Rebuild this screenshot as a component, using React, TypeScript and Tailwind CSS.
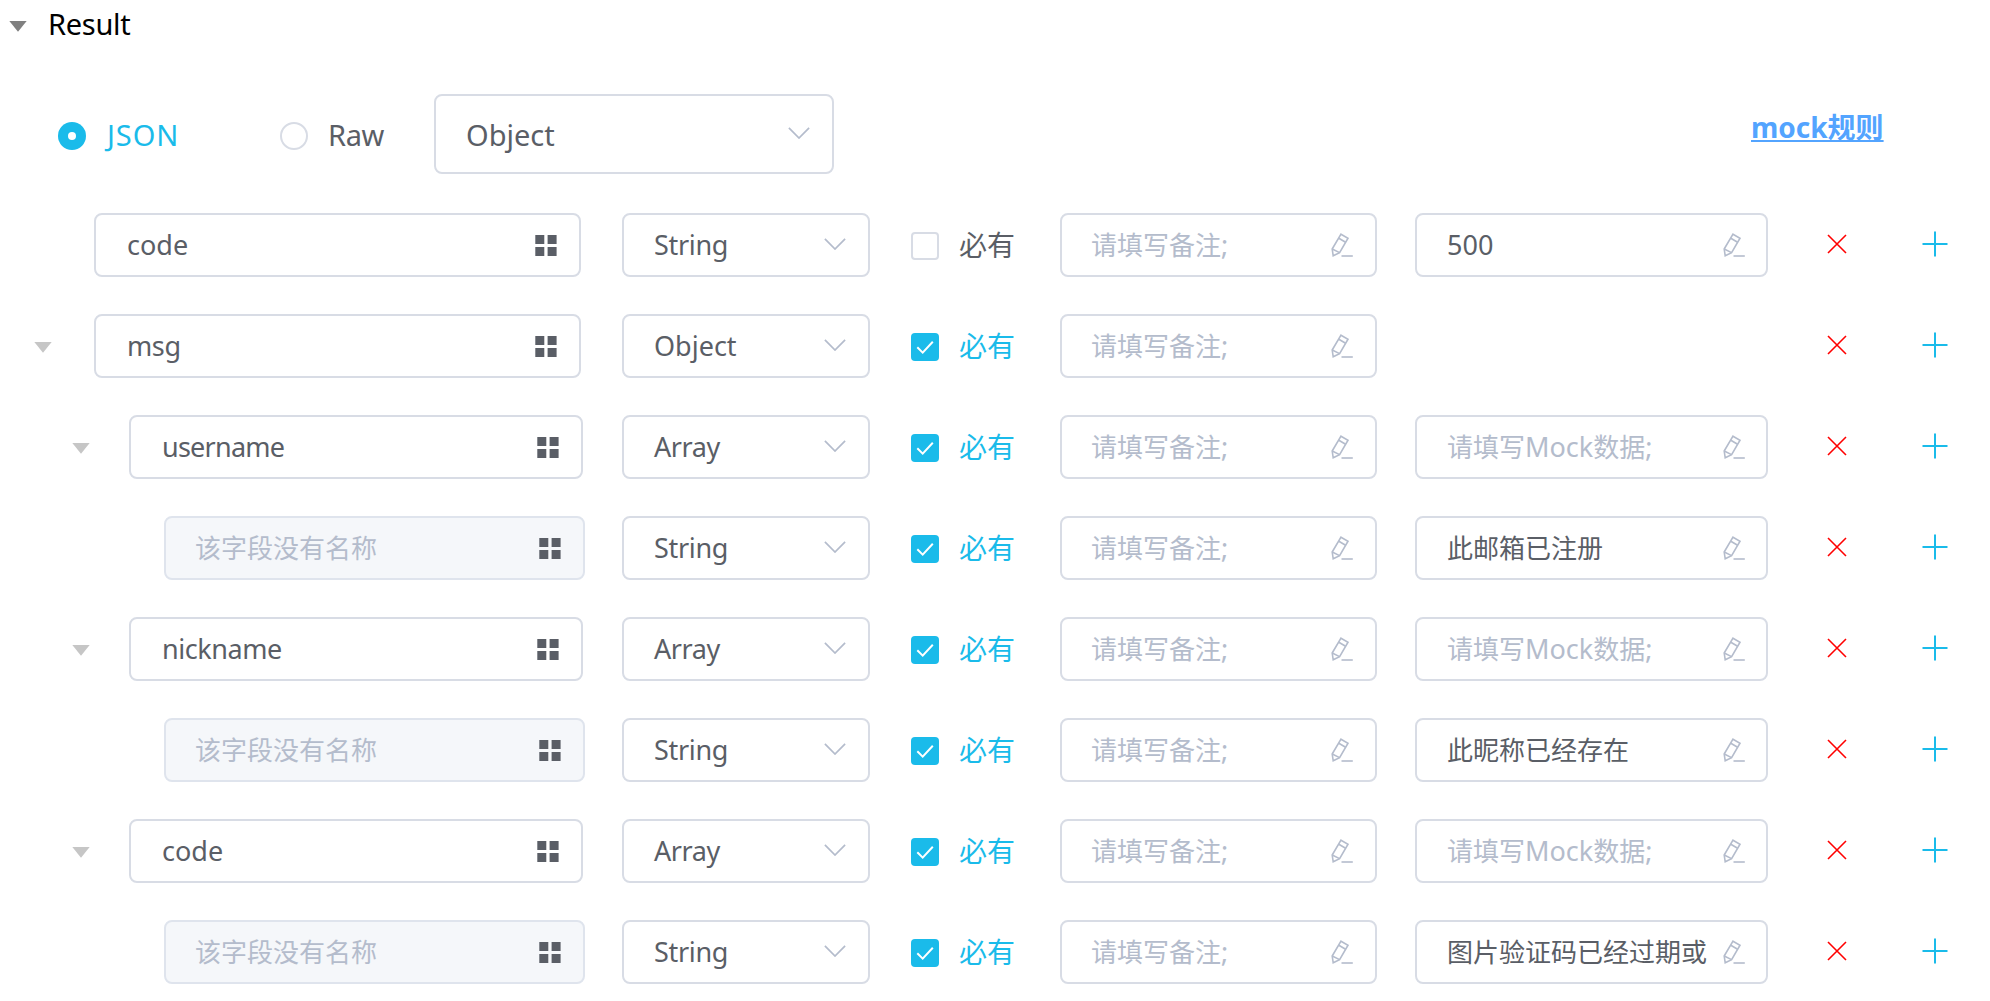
import React from "react";

const GRAY = "text-[#5a5e66]";

const tracking: Record<string, string> = {
  username: "tracking-[-0.75px]",
  nickname: "tracking-[-0.45px]",
  String: "tracking-[-0.3px]",
  Array: "tracking-[-0.4px]",
  msg: "tracking-[-0.4px]",
  JSON: "tracking-[0.9px]",
  Raw: "tracking-[-0.4px]",
  Result: "tracking-[-0.3px]",
};

function Txt({ children, size = "s" }: { children: string; size?: "s" | "m" }) {
  const parts = children.match(/[\x00-\x7f]+|[^\x00-\x7f]+/g) ?? [];
  return (
    <>
      {parts.map((p, i) =>
        p.charCodeAt(0) < 128 ? (
          <span key={i} className={`${size === "m" ? "text-[29px]" : "text-[27px]"} ${tracking[p] ?? ""}`}>{p}</span>
        ) : (
          <span key={i} className={size === "m" ? "text-[28px]" : "text-[26px]"}>{p}</span>
        ),
      )}
    </>
  );
}

function Triangle({ className }: { className: string }) {
  return (
    <svg viewBox="0 0 18 11" className={`h-[11px] w-[18px] shrink-0 fill-current ${className}`}>
      <path d="M0.3 0H17.7L9 10.7Z" />
    </svg>
  );
}

function Chevron() {
  return (
    <svg viewBox="0 0 22 12" className="mb-[3px] h-3 w-[22px] shrink-0 fill-none stroke-[#b4bccc] stroke-[1.7]">
      <path d="M0.9 0.9 11 11 21.1 0.9" />
    </svg>
  );
}

function GridIcon() {
  return (
    <svg viewBox="0 0 22 21" className="h-[21px] w-[22px] shrink-0 fill-[#5a5e66]">
      <path d="M.3 0h9v9h-9zM12.6 0h9v9h-9zM.3 12h9v9h-9zM12.6 12h9v9h-9z" />
    </svg>
  );
}

function Pencil() {
  return (
    <svg viewBox="0 0 22 24" className="h-6 w-[22px] shrink-0 fill-none stroke-[#b4bccc] stroke-[1.6]">
      <path d="M10 1.2 17 5.2 8.6 19.6 2.2 22.8 1.2 16Z" />
      <path d="M7.8 5.2 14.6 9.2M1.2 16 8.6 19.6" />
      <path d="M10.5 23H21.8" />
    </svg>
  );
}

const box = "flex h-16 shrink-0 items-center rounded-lg border-2 border-[#d8dce5]";
const line = "pt-1 leading-[56px]";

function Field({ text, hint, className }: { text?: string; hint: string; className: string }) {
  return (
    <div className={`${box} ${className}`}>
      <span className={`min-w-0 flex-1 overflow-hidden whitespace-nowrap ${line} ${text ? GRAY : "text-[#b4bccc]"}`}>
        <Txt>{text ?? hint}</Txt>
      </span>
      <Pencil />
    </div>
  );
}

type Row = { name?: string; level: 0 | 1 | 2; type: string; required: boolean; open?: boolean; mock?: string; noMock?: boolean };

const rows: Row[] = [
  { name: "code", level: 0, type: "String", required: false, mock: "500" },
  { name: "msg", level: 0, type: "Object", required: true, open: true, noMock: true },
  { name: "username", level: 1, type: "Array", required: true, open: true },
  { level: 2, type: "String", required: true, mock: "此邮箱已注册" },
  { name: "nickname", level: 1, type: "Array", required: true, open: true },
  { level: 2, type: "String", required: true, mock: "此昵称已经存在" },
  { name: "code", level: 1, type: "Array", required: true, open: true },
  { level: 2, type: "String", required: true, mock: "图片验证码已经过期或" },
];

const gutter = { 0: "w-[94px] pl-[34px]", 1: "w-[129px] pl-[72px]", 2: "w-[164px]" };
const nameWidth = { 0: "w-[487px] mr-[41px]", 1: "w-[454px] mr-[39px]", 2: "w-[421px] mr-[37px]" };

function FieldRow({ row }: { row: Row }) {
  return (
    <div className="flex h-16 items-center">
      <div className={`shrink-0 ${gutter[row.level]}`}>{row.open && <Triangle className="mt-[3px] text-[#c6c6c6]" />}</div>
      <div className={`${box} pr-[22px] ${nameWidth[row.level]} ${row.name ? "pl-[31px]" : "border-[#dfe4ed] bg-[#f5f7fa] pl-[29px]"}`}>
        <span className={`flex-1 ${line} ${row.name ? GRAY : "text-[#b4bccc]"}`}>
          <Txt>{row.name ?? "该字段没有名称"}</Txt>
        </span>
        <GridIcon />
      </div>
      <div className={`${box} mr-[41px] w-[248px] pr-[22px] pl-[30px] ${GRAY}`}>
        <span className={`flex-1 ${line}`}>
          <Txt>{row.type}</Txt>
        </span>
        <Chevron />
      </div>
      {row.required ? (
        <div className="mt-[2px] flex size-7 shrink-0 items-center justify-center rounded bg-[#1abbea]">
          <svg viewBox="0 0 28 28" className="size-7 fill-none stroke-white stroke-2">
            <path d="M6.3 14.3 11.7 19.6 21.8 8.8" />
          </svg>
        </div>
      ) : (
        <div className="mt-[2px] size-7 shrink-0 rounded border-2 border-[#d8dce5]" />
      )}
      <div className={`ml-5 w-[101px] shrink-0 ${line} ${row.required ? "text-[#1abbea]" : GRAY}`}>
        <Txt size="m">必有</Txt>
      </div>
      <Field hint="请填写备注;" className="mr-[38px] w-[317px] pr-[22px] pl-[29px]" />
      {row.noMock ? (
        <div className="w-[353px] shrink-0" />
      ) : (
        <Field text={row.mock} hint="请填写Mock数据;" className="w-[353px] pr-[21px] pl-[30px]" />
      )}
      <svg viewBox="0 0 20 20" className="mr-[75px] mb-[3px] ml-[59px] size-5 shrink-0 fill-none stroke-[#ff0000] stroke-[1.6]">
        <path d="M1 1 19 19M19 1 1 19" />
      </svg>
      <svg viewBox="0 0 26 26" className="mb-[2px] size-[26px] shrink-0 fill-none stroke-[#1abbea] stroke-2">
        <path d="M13 .5V25.5M.5 13H25.5" />
      </svg>
    </div>
  );
}

export default function App() {
  return (
    <main className="h-[1001px] w-[1990px] overflow-hidden bg-white font-['Noto_Sans','Noto_Sans_CJK_SC',sans-serif]">
      <header className="flex h-[52px] items-center pl-[9px]">
        <Triangle className="text-[#808080]" />
        <span className="mt-px ml-[21px] leading-[46px] text-black"><Txt size="m">Result</Txt></span>
      </header>
      <section className="mt-[42px] flex h-20 items-center">
        <div className="mt-1 ml-[58px] flex size-7 items-center justify-center rounded-full bg-[#1abbea]">
          <div className="size-2 rounded-full bg-white" />
        </div>
        <span className="mt-[2px] ml-[21px] w-[173px] text-[#1abbea]"><Txt size="m">JSON</Txt></span>
        <div className="mt-1 size-7 rounded-full border-2 border-[#d8dce5]" />
        <span className={`mt-[2px] ml-5 w-[106px] ${GRAY}`}><Txt size="m">Raw</Txt></span>
        <div className={`flex h-20 w-[400px] items-center rounded-lg border-2 border-[#d8dce5] pr-[22px] pl-[30px] ${GRAY}`}>
          <span className="mt-[2px] flex-1"><Txt size="m">Object</Txt></span>
          <Chevron />
        </div>
        <a className="mb-[15px] ml-[917px] text-[28px] leading-[40px] font-bold whitespace-nowrap text-[#53a4ff] underline">mock规则</a>
      </section>
      <section className="mt-[39px] flex flex-col gap-[37px]">
        {rows.map((r, i) => (
          <FieldRow key={i} row={r} />
        ))}
      </section>
    </main>
  );
}
